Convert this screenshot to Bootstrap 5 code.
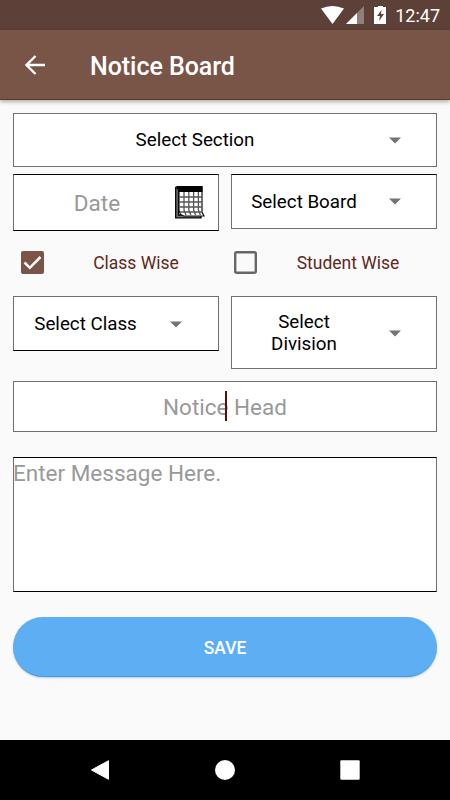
<!DOCTYPE html>
<html lang="en">
<head>
<meta charset="utf-8">
<meta name="viewport" content="width=device-width, initial-scale=1">
<title>Notice Board</title>
<link href="https://cdn.jsdelivr.net/npm/bootstrap@5.3.0/dist/css/bootstrap.min.css" rel="stylesheet">
<style>
  body { font-family: Roboto, "Liberation Sans", sans-serif; background: #fafafa; color: #000; }
  svg { display: block; flex: none; }
  .screen { width: 450px; height: 800px; }
  .status { height: 30px; background: #5d4038; padding-right: 10px; font-size: 18px; line-height: 30px; }
  .clock { padding-top: 1px; }
  .appbar { height: 70px; background: #795548; border-bottom: 1px solid #6b3516; box-shadow: 0 2px 4px rgba(0,0,0,.3); padding-left: 25px; }
  .appbar h1 { font-size: 25px; font-weight: 500; margin-left: 45px; padding-top: 4px; letter-spacing: -.05px; }
  .form-area { padding: 13px 13px 0; }
  .field { background: #fff; border: 1px solid #707070; }
  .pair { display: grid; grid-template-columns: 206px 206px; column-gap: 12px; align-items: start; }
  .picker { height: 55px; font-size: 18.75px; line-height: 22px; padding-right: 35px; }
  .picker-label { padding-right: 13px; }
  .section-picker { height: 54px; margin-bottom: 7px; }
  .class-picker, .tall { padding-top: 1px; }
  .class-picker { padding-right: 36px; }
  .tall { height: 73px; }
  .date { height: 57px; border-top-color: #000; border-bottom-color: #000; padding-right: 13px; }
  .date .hint { padding: 2px 0 0 5px; }
  .board { border-top-color: #000; }
  .class-picker { border-bottom-color: #000; }
  .hint { color: #999; font-size: 22.5px; line-height: 27px; }
  .check-row { height: 63px; }
  .check-pair { margin-bottom: 2px; }
  .check-text { color: #5f281c; font-size: 17.5px; padding-top: 1px; }
  .class-wise { padding-left: 9px; }
  .student-wise { padding-left: 2px; }
  .student-box { margin-left: 3px; }
  .head-box { height: 51px; margin-top: 12px; }
  .head-box .hint { padding-top: 2px; }
  .caret { position: absolute; left: 211px; top: 9px; width: 2px; height: 30px; background: #5c0d0a; }
  .message { height: 135px; margin-top: 25px; border-top-color: #000; border-bottom-color: #000; padding-top: 2px; text-indent: -1px; }
  .save { height: 60px; margin-top: 25px; padding-top: 9px; background: #5eaef4; color: #fff; font-size: 17.5px; font-weight: 500; border: 0; border-bottom: 1px solid #389ff0; box-shadow: 0 1px 3px -1px rgba(0,0,0,.4); }
  .softkeys { height: 60px; padding: 0 90px; }
</style>
<script src="https://cdn.jsdelivr.net/npm/bootstrap@5.3.0/dist/js/bootstrap.bundle.min.js"></script>
</head>
<body>
<div class="screen d-flex flex-column overflow-hidden">
  <div class="status d-flex align-items-center justify-content-end text-white">
    <svg width="66" height="20" viewBox="0 0 66 20"><path fill="#fff" d="M0 3.600Q11.500-1.500 23 3.600L11.500 19Z"/><path fill="#937f79" d="M43 1V19H25Z"/><path fill="#fff" d="M36 8V19H25Z"/><path fill="#fff" d="M54 2h3V1h5v1h3v17H53V2Z"/><path fill="#5d4038" d="M60.500 5l-4.500 6h3l-1 5 5-7h-3Z"/></svg>
    <span class="clock ms-2">12:47</span>
  </div>
  <header class="appbar d-flex align-items-center">
    <svg width="20" height="20" viewBox="0 0 20 20" fill="none" stroke="#fff" stroke-width="2.300"><path d="M20 10H2M10.500 1L1.500 10l9 9"/></svg>
    <h1 class="mb-0 text-white">Notice Board</h1>
  </header>
  <main class="form-area flex-grow-1">
    <div class="field picker section-picker d-flex align-items-center">
      <span class="picker-label flex-grow-1 text-center">Select Section</span>
      <svg width="12" height="7" viewBox="0 0 12 7"><path fill="#737373" d="M0 .5h12L6 6.500Z"/></svg>
    </div>
    <div class="pair">
      <div class="field date d-flex align-items-center">
        <span class="hint flex-grow-1 text-center">Date</span>
        <svg width="30" height="34" viewBox="0 0 30 34"><path fill="#777" stroke="#000" stroke-width="1.300" d="M.7 1.500L3.500 3v26h22.500v2.800H.7Z"/><path fill="#fff" stroke="#111" stroke-width="1.200" d="M4 1h23v25l2 4H9Q4.500 29 4 24Z"/><path fill="#000" d="M1 0h26.500v6H4Z"/><path fill="none" stroke="#555" stroke-width="1.300" d="M9 6v18l2 5M13.800 6v18l2 5M18.600 6v18l2 5M23.400 6v18l2 5M4 11h23M4 16h23M4 21h23M5 26h22"/></svg>
      </div>
      <div class="field picker board d-flex align-items-center">
        <span class="picker-label flex-grow-1 text-center">Select Board</span>
        <svg width="12" height="7" viewBox="0 0 12 7"><path fill="#737373" d="M0 .5h12L6 6.500Z"/></svg>
      </div>
    </div>
    <div class="pair check-pair">
      <div class="check-row d-flex align-items-center ps-2">
        <svg width="23" height="23" viewBox="0 0 23 23"><rect width="23" height="23" rx="2" fill="#795548"/><path fill="none" stroke="#fff" stroke-width="2.500" d="M3.500 11.500l5.300 5.300L19.500 6"/></svg>
        <span class="check-text class-wise flex-grow-1 text-center">Class Wise</span>
      </div>
      <div class="check-row d-flex align-items-center">
        <svg class="student-box" width="23" height="23" viewBox="0 0 23 23"><rect x="1.200" y="1.200" width="20.600" height="20.600" rx="1.500" fill="none" stroke="#666" stroke-width="2.400"/></svg>
        <span class="check-text student-wise flex-grow-1 text-center">Student Wise</span>
      </div>
    </div>
    <div class="pair">
      <div class="field picker class-picker d-flex align-items-center">
        <span class="picker-label flex-grow-1 text-center">Select Class</span>
        <svg width="12" height="7" viewBox="0 0 12 7"><path fill="#737373" d="M0 .5h12L6 6.500Z"/></svg>
      </div>
      <div class="field picker tall d-flex align-items-center">
        <span class="picker-label flex-grow-1 text-center">Select<br>Division</span>
        <svg width="12" height="7" viewBox="0 0 12 7"><path fill="#737373" d="M0 .5h12L6 6.500Z"/></svg>
      </div>
    </div>
    <div class="field head-box position-relative d-flex align-items-center justify-content-center">
      <span class="hint">Notice Head</span><span class="caret"></span>
    </div>
    <div class="field message hint">Enter Message Here.</div>
    <button type="button" class="save btn rounded-pill w-100 d-flex align-items-center justify-content-center">SAVE</button>
  </main>
  <nav class="softkeys bg-black d-flex align-items-center justify-content-between">
    <svg width="20" height="20" viewBox="0 0 20 20"><path fill="#fff" stroke="#fff" stroke-linejoin="round" d="M1.500 10L18.500 .700V19.300Z"/></svg>
    <svg width="20" height="20" viewBox="0 0 20 20"><circle cx="10" cy="10" r="10" fill="#fff"/></svg>
    <svg width="20" height="20" viewBox="0 0 20 20"><rect x=".3" y=".3" width="19.400" height="19.400" rx="1" fill="#fff"/></svg>
  </nav>
</div>
</body>
</html>
